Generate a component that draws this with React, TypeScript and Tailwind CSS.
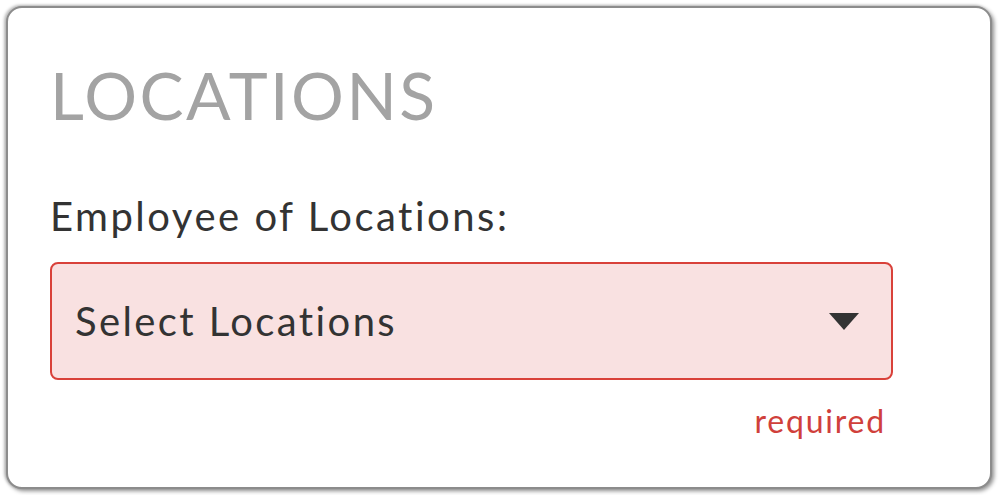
import React from "react";

export default function App() {
  return (
    <div className="w-[999px] h-[495px] bg-white p-[6px] font-['Lato',sans-serif]">
      <div className="w-[986px] h-[483px] rounded-[16px] border-2 border-[#8c8c8c] bg-white shadow-[2px_2px_4px_rgba(0,0,0,0.45),-2px_-1px_3px_rgba(0,0,0,0.25)] pl-[42px] pr-[97px] pt-[47px]">
        <h1 className="text-[66px] leading-[80px] text-[#a3a3a3] tracking-[2.5px]">LOCATIONS</h1>
        <div className="mt-[57px] text-[40px] leading-[48px] text-[#333333] tracking-[2.5px]">Employee of Locations:</div>
        <div className="mt-[22px] h-[118px] rounded-[8px] border-2 border-[#d9413a] bg-[#f9e1e1] flex items-center justify-between pl-[23px] pr-[32px]">
          <span className="text-[40px] text-[#333333] tracking-[2.4px]">Select Locations</span>
          <svg width="30" height="17" viewBox="0 0 30 17">
            <polygon points="0,0 30,0 15,17" fill="#333333" />
          </svg>
        </div>
        <div className="flex justify-end pr-[7px] mt-[21px]">
          <span className="text-[32px] leading-[40px] text-[#d0403b] tracking-[1.8px]">required</span>
        </div>
      </div>
    </div>
  );
}
